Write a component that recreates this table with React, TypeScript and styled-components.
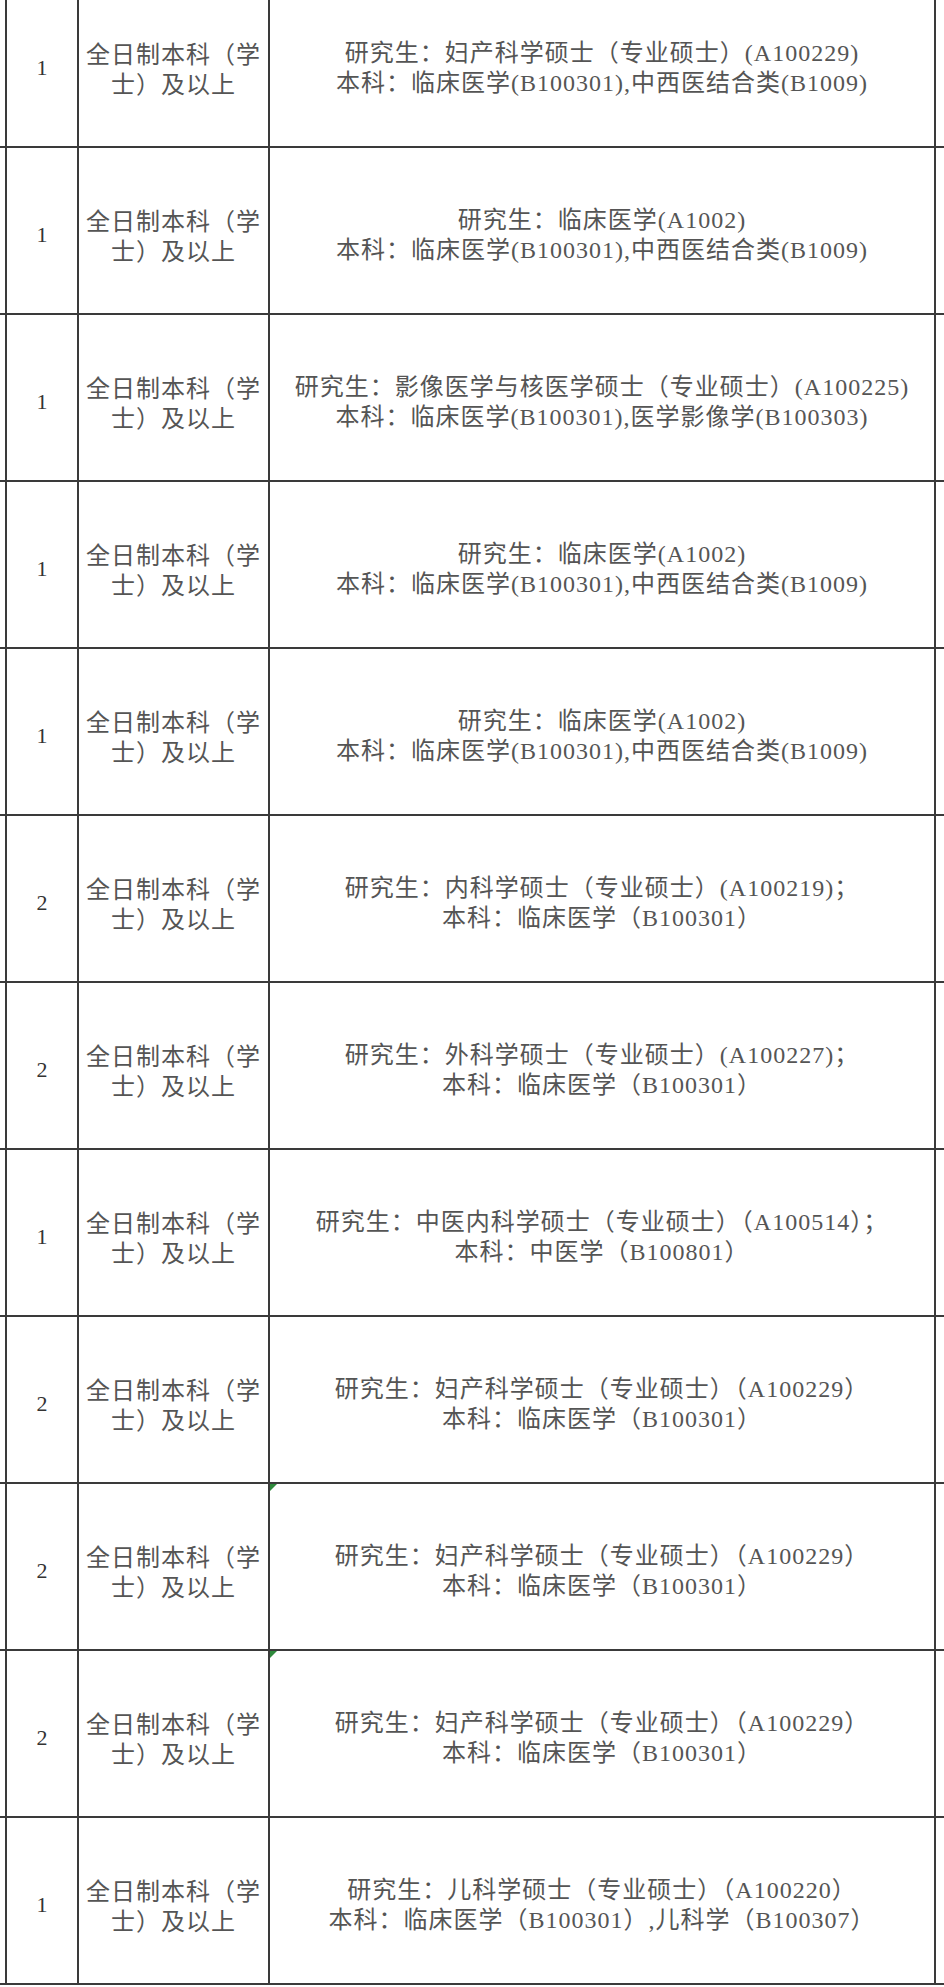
import styled, { createGlobalStyle } from 'styled-components';

const GlobalStyle = createGlobalStyle`
    html, body {
        margin: 0;
        padding: 0;
        background: #ffffff;
    }

    body {
        font-family: "Liberation Serif", "Noto Sans CJK SC", serif;
    }
`

const Table = styled.div`
    width: 944px;
    margin-top: -19px;
    background: #ffffff;
`

const Row = styled.div`
    display: grid;
    grid-template-columns: 5px 72px 191px 666px 1fr;
    height: 167px;
    box-sizing: border-box;
    border-bottom: 2px solid #3a3a3a;
`

const Edge = styled.div<{ $ruled?: boolean }>`
    border-left: ${({ $ruled }) => ($ruled ? '2px solid #3a3a3a' : 'none')};
`

const Cell = styled.div`
    display: flex;
    flex-direction: column;
    align-items: center;
    justify-content: center;
    box-sizing: border-box;
    padding-top: 9px;
    border-left: 2px solid #3a3a3a;
    text-align: center;
    position: relative;
`

const CountCell = styled(Cell)`
    font-family: "Liberation Serif", serif;
    font-size: 22px;
    color: #333333;
`

const DegreeCell = styled(Cell)`
    padding-left: 4px;
    padding-right: 4px;
    font-family: "Noto Sans CJK SC", sans-serif;
    font-size: 24px;
    line-height: 30px;
    letter-spacing: 1px;
    color: #555555;
`

const MajorCell = styled(Cell)<{ $flagged?: boolean }>`
    font-size: 24px;
    line-height: 30px;
    letter-spacing: 1px;
    color: #555555;

    &::before {
        content: '';
        display: ${({ $flagged }) => ($flagged ? 'block' : 'none')};
        position: absolute;
        top: 0;
        left: 0;
        width: 0;
        height: 0;
        border-top: 7px solid #2f8a3c;
        border-right: 7px solid transparent;
    }
`

const Line = styled.span`
    display: block;
    white-space: nowrap;
`

type Entry = {
    count: number;
    lines: string[];
    flagged?: boolean;
}

const DEGREE = '全日制本科（学士）及以上';

const entries: Entry[] = [
    { count: 1, lines: ['研究生：妇产科学硕士（专业硕士）(A100229)', '本科：临床医学(B100301),中西医结合类(B1009)'] },
    { count: 1, lines: ['研究生：临床医学(A1002)', '本科：临床医学(B100301),中西医结合类(B1009)'] },
    { count: 1, lines: ['研究生：影像医学与核医学硕士（专业硕士）(A100225)', '本科：临床医学(B100301),医学影像学(B100303)'] },
    { count: 1, lines: ['研究生：临床医学(A1002)', '本科：临床医学(B100301),中西医结合类(B1009)'] },
    { count: 1, lines: ['研究生：临床医学(A1002)', '本科：临床医学(B100301),中西医结合类(B1009)'] },
    { count: 2, lines: ['研究生：内科学硕士（专业硕士）(A100219)；', '本科：临床医学（B100301）'] },
    { count: 2, lines: ['研究生：外科学硕士（专业硕士）(A100227)；', '本科：临床医学（B100301）'] },
    { count: 1, lines: ['研究生：中医内科学硕士（专业硕士）（A100514）；', '本科：中医学（B100801）'] },
    { count: 2, lines: ['研究生：妇产科学硕士（专业硕士）（A100229）', '本科：临床医学（B100301）'] },
    { count: 2, lines: ['研究生：妇产科学硕士（专业硕士）（A100229）', '本科：临床医学（B100301）'], flagged: true },
    { count: 2, lines: ['研究生：妇产科学硕士（专业硕士）（A100229）', '本科：临床医学（B100301）'], flagged: true },
    { count: 1, lines: ['研究生：儿科学硕士（专业硕士）（A100220）', '本科：临床医学（B100301）,儿科学（B100307）'] },
];

const App = () => {
    return (
        <>
            <GlobalStyle />
            <Table>
                {entries.map((entry, i) => (
                    <Row key={i}>
                        <Edge />
                        <CountCell>{entry.count}</CountCell>
                        <DegreeCell>{DEGREE}</DegreeCell>
                        <MajorCell $flagged={entry.flagged}>
                            {entry.lines.map((line, j) => (
                                <Line key={j}>{line}</Line>
                            ))}
                        </MajorCell>
                        <Edge $ruled />
                    </Row>
                ))}
            </Table>
        </>
    );
};

export default App;
